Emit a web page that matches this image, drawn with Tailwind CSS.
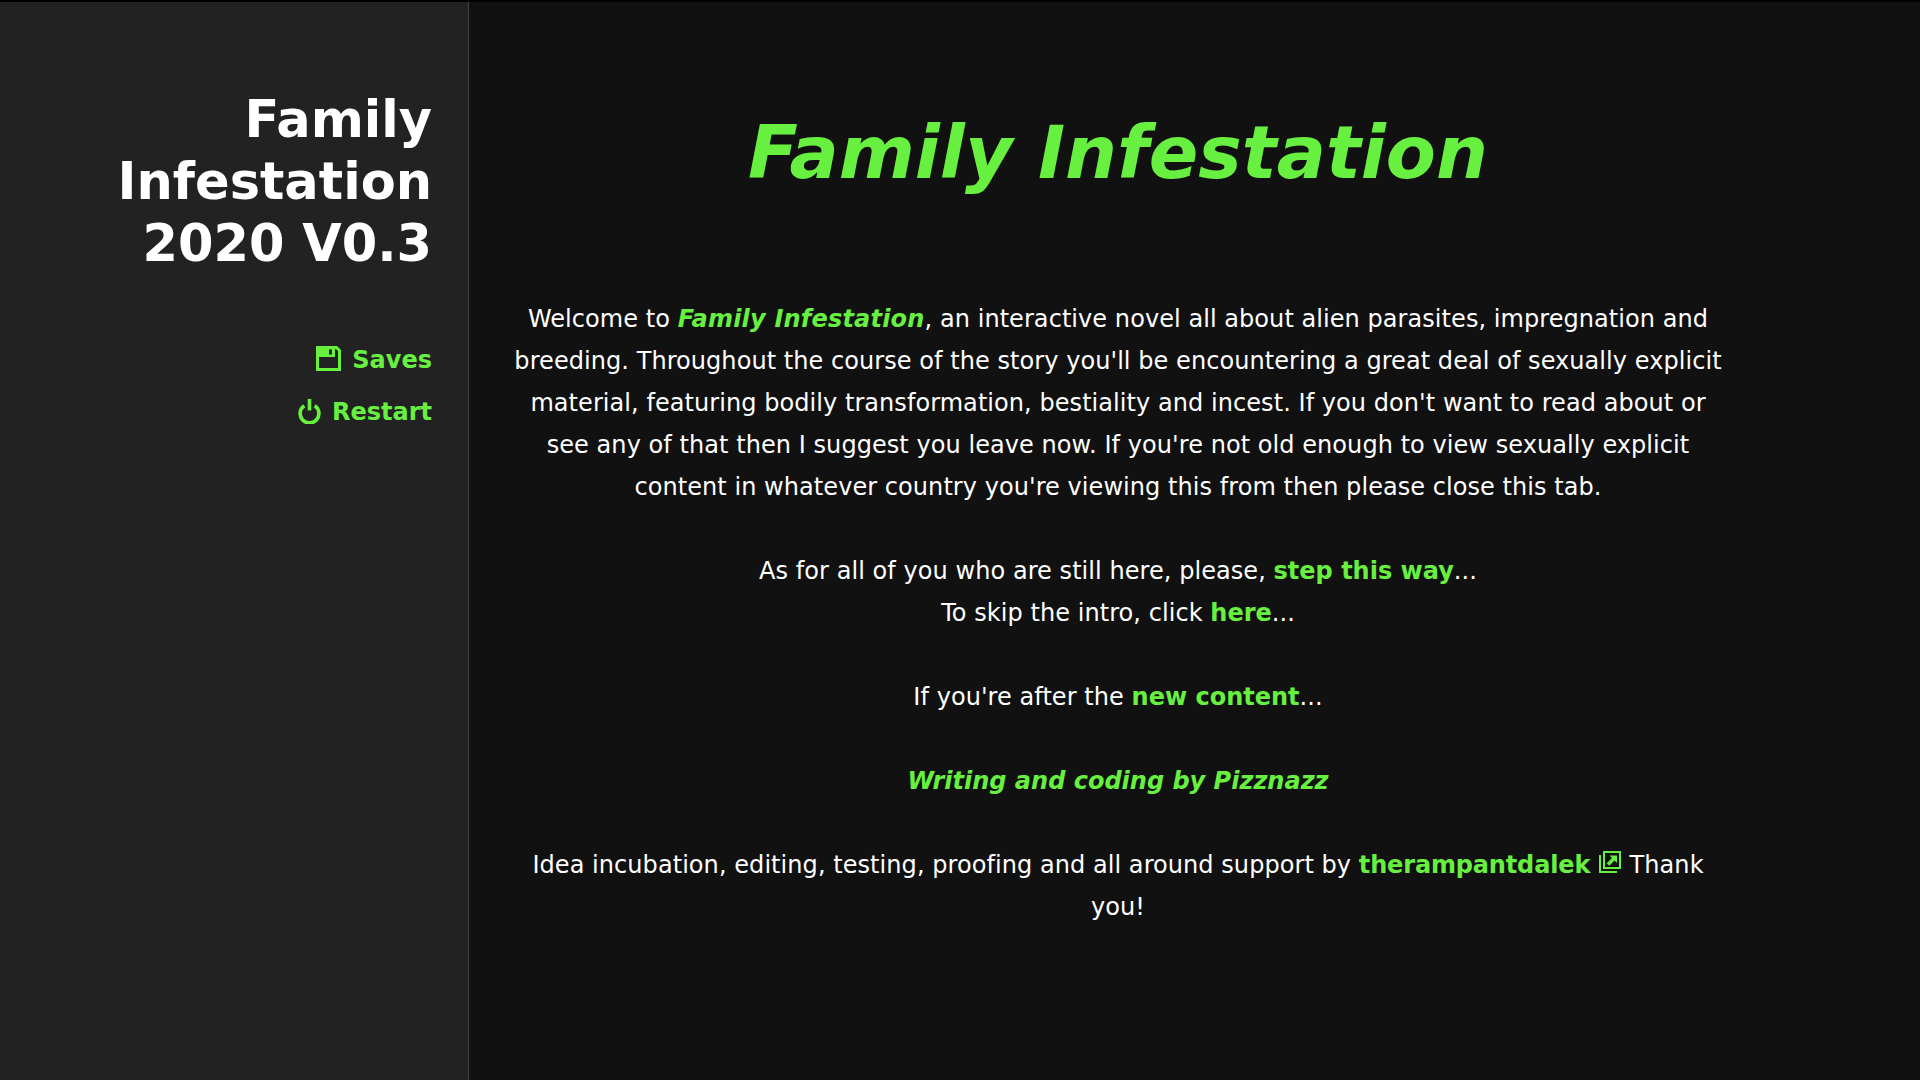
<!DOCTYPE html>
<html lang="en">
<head>
<meta charset="utf-8">
<title>Family Infestation</title>
<script src="https://cdn.jsdelivr.net/npm/@tailwindcss/browser@4"></script>
</head>
<body class="bg-[#111] text-white font-['DejaVu_Sans',sans-serif] overflow-hidden">
<div class="h-[2px] bg-black"></div>
<div class="flex h-[1078px]">
  <aside class="w-[469px] shrink-0 bg-[#222] border-r border-[#444] pr-[36px] pl-[20px] pt-[87px] text-right">
    <h1 class="text-[51px] leading-[62px] font-bold text-white">Family Infestation 2020 V0.3</h1>
    <nav class="mt-[67px] flex flex-col items-end gap-[16px] text-[24px] leading-[36px] font-bold text-[#68f040]">
      <a class="flex items-center gap-[11px]">
        <svg class="w-[25px] h-[25px] -mt-[4px]" viewBox="0 0 25 25" fill="none"><path d="M1.5 1.5h19l3 3v19h-22z" stroke="#68f040" stroke-width="3"/><path d="M2 2h17v9H2z" fill="#68f040"/><path d="M13 3.5h3v5h-3z" fill="#222"/></svg>
        <span>Saves</span>
      </a>
      <a class="flex items-center gap-[11px]">
        <svg class="w-[23px] h-[25px] -mt-[1px]" viewBox="0 0 22 24" fill="none" stroke="#68f040" stroke-width="3.5"><path d="M6 6.5a9 9 0 1 0 10 0"/><path d="M11 0v11"/></svg>
        <span>Restart</span>
      </a>
    </nav>
  </aside>
  <main class="ml-[41px] w-[1216px] text-center text-[24px] leading-[42px] pt-[97px] tracking-[0.06px]">
    <h2 class="text-[73px] leading-[108px] font-bold italic text-[#68f040] tracking-normal">Family Infestation</h2>
    <p class="mt-[91px]">Welcome to <a class="font-bold italic text-[#68f040] tracking-[0.2px]">Family Infestation</a>, an interactive novel all about alien parasites, impregnation and breeding. Throughout the course of the story you'll be encountering a great deal of sexually explicit material, featuring bodily transformation, bestiality and incest. If you don't want to read about or see any of that then I suggest you leave now. If you're not old enough to view sexually explicit content in whatever country you're viewing this from then please close this tab.</p>
    <p class="mt-[42px]">As for all of you who are still here, please, <a class="font-bold text-[#68f040] tracking-normal">step this way</a>...<br>To skip the intro, click <a class="font-bold text-[#68f040] tracking-normal">here</a>...</p>
    <p class="mt-[42px]">If you're after the <a class="font-bold text-[#68f040] tracking-normal">new content</a>...</p>
    <p class="mt-[42px] font-bold italic text-[#68f040] tracking-normal">Writing and coding by Pizznazz</p>
    <p class="mt-[42px]">Idea incubation, editing, testing, proofing and all around support by <a class="font-bold text-[#68f040] tracking-[-0.15px]">therampantdalek</a> <svg class="inline-block w-[22px] h-[22px] mx-[1px] align-[0px]" viewBox="0 0 22 22" fill="none" stroke="#68f040" stroke-width="2"><path d="M5 1h16v16H5z"/><path d="M1 4v17h17"/><path d="M9 13.5l6-6" stroke-width="3.5"/><path d="M10.5 4.5h7.5v7.5z" fill="#68f040" stroke="none"/></svg> Thank you!</p>
  </main>
</div>
</body>
</html>
